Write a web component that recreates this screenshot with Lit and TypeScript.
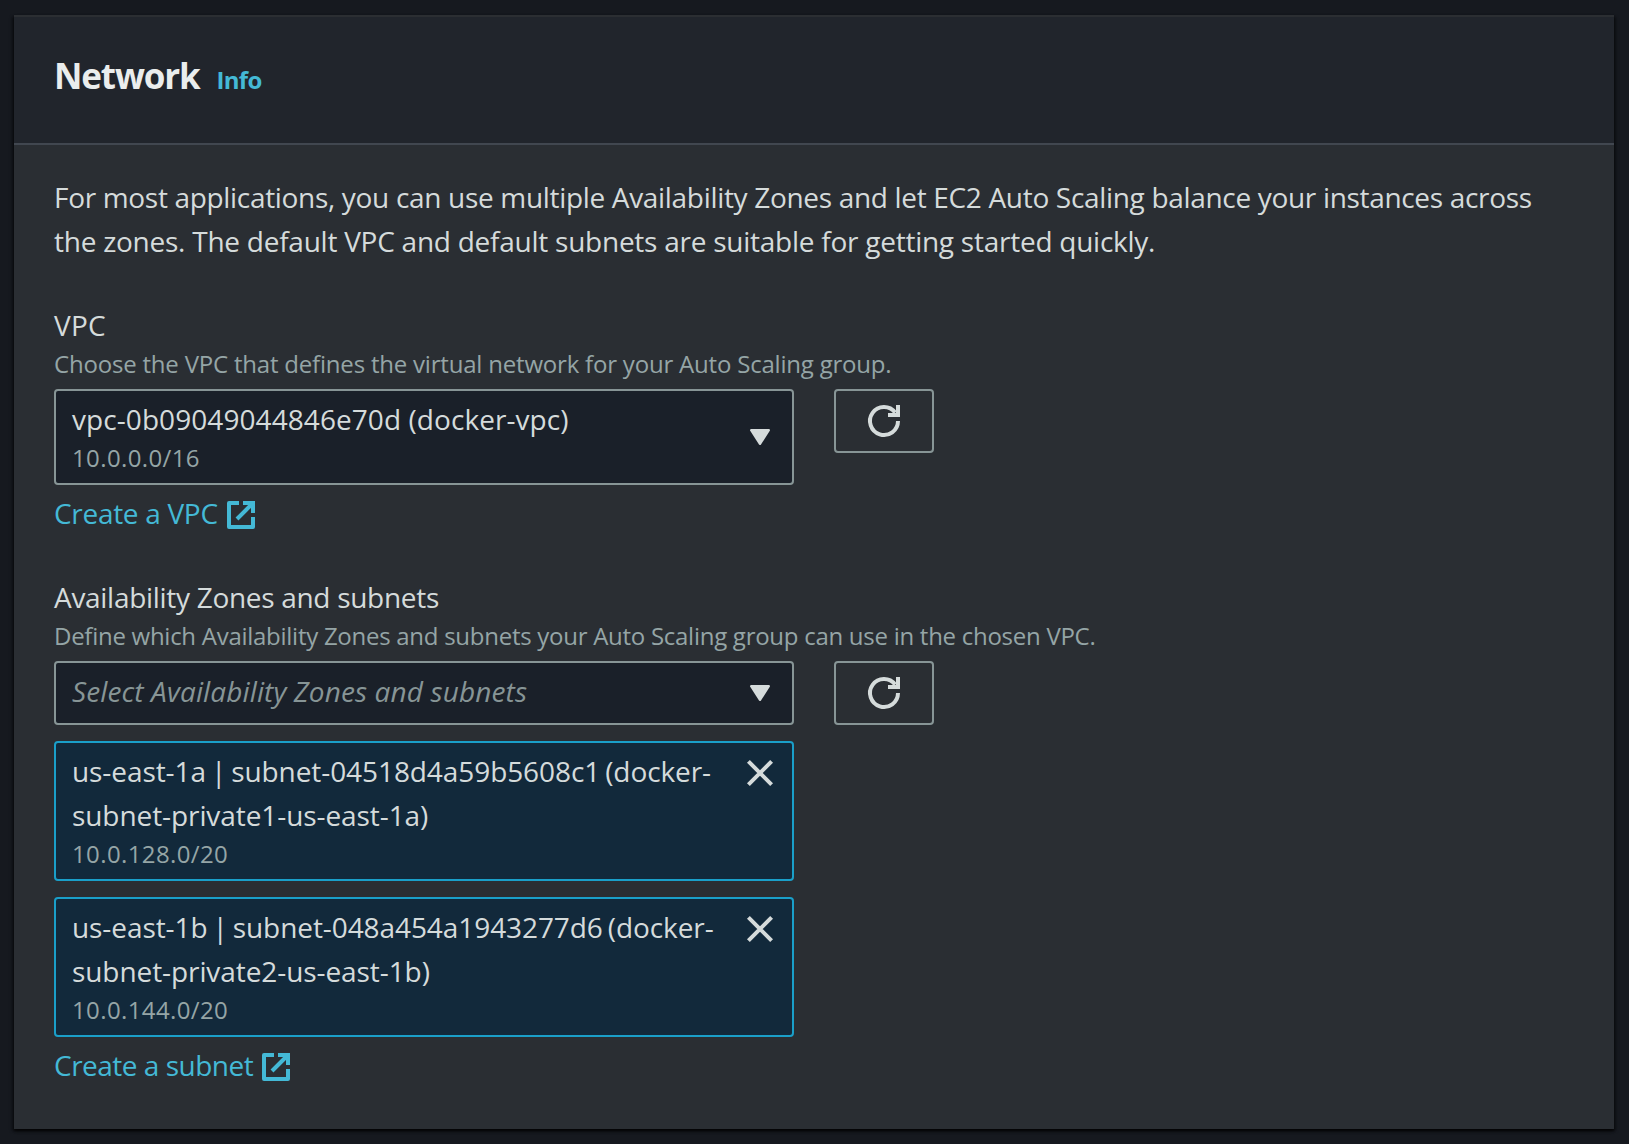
import { LitElement, html, svg, css } from 'lit';
import { customElement, property } from 'lit/decorators.js';

const glyphs = {
  refresh: {
    w: 32,
    h: 32,
    body: svg`<g fill="none" stroke="currentColor" stroke-width="4">
      <path d="M30 16A14 14 0 1 1 27.2 7.6" /><path d="M30 0V10H20" /></g>`,
  },
  caret: {
    w: 20,
    h: 16,
    body: svg`<path d="M1.2 1.2H18.8L10 14.8Z" fill="currentColor" stroke="currentColor" stroke-width="2.4" stroke-linejoin="round" />`,
  },
  close: {
    w: 26,
    h: 26,
    body: svg`<path d="M1.4 1.4L24.6 24.6M24.6 1.4L1.4 24.6" fill="none" stroke="currentColor" stroke-width="4" />`,
  },
  external: {
    w: 28,
    h: 28,
    body: svg`<g fill="none" stroke="currentColor" stroke-width="4">
      <path d="M12 2H2V26H26V16" stroke-linejoin="round" />
      <path d="M16 2H26V12" /><path d="M10 18L25.5 2.5" /></g>`,
  },
};

@customElement('ui-icon')
class UiIcon extends LitElement {
  @property() name: keyof typeof glyphs = 'close';

  static styles = css`
    :host { display: block; flex: none; }
    svg { display: block; overflow: visible; }
  `;

  render() {
    const g = glyphs[this.name];
    return html`<svg width=${g.w} height=${g.h} viewBox="0 0 ${g.w} ${g.h}" aria-hidden="true">${g.body}</svg>`;
  }
}

interface Subnet {
  name: string;
  cidr: string;
}

@customElement('app-root')
class AppRoot extends LitElement {
  private subnets: Subnet[] = [
    { name: 'us-east-1a | subnet-04518d4a59b5608c1 (docker-subnet-private1-us-east-1a)', cidr: '10.0.128.0/20' },
    { name: 'us-east-1b | subnet-048a454a1943277d6 (docker-subnet-private2-us-east-1b)', cidr: '10.0.144.0/20' },
  ];

  static styles = css`
    :host {
      display: block;
      box-sizing: border-box;
      height: 1144px;
      padding: 15px 15px 15px 14px;
      background: #16191f;
      color: #d5dbdb;
      font: 28px/44px "Open Sans", "Noto Sans", sans-serif;
      letter-spacing: -0.3px;
      overflow: hidden;
    }
    * { box-sizing: border-box; }
    .panel {
      height: 1114px;
      background: #2a2e33;
      box-shadow: 0 2px 2px rgba(0, 0, 0, 0.55), 2px 2px 3px rgba(0, 0, 0, 0.4), -2px 2px 3px rgba(0, 0, 0, 0.4);
    }
    .header {
      display: flex;
      align-items: baseline;
      gap: 17px;
      height: 130px;
      padding: 35px 40px 0;
      background: #21252c;
      border-top: 2px solid #2b2e32;
      border-bottom: 2px solid #414750;
    }
    h2 {
      margin: 0;
      color: #eaeded;
      font-size: 35px;
      line-height: 47px;
      font-weight: 700;
      letter-spacing: -1.15px;
    }
    a { color: #44b9d6; text-decoration: none; }
    .info { font-size: 24px; line-height: 33px; font-weight: 700; letter-spacing: -0.7px; }
    .body { padding: 30px 40px 0; }
    p { margin: 0; letter-spacing: -0.32px; }
    .second { letter-spacing: -0.25px; }
    .field { margin-top: 40px; }
    .label.vpc { letter-spacing: 0.2px; }
    .hint {
      margin-bottom: 9px;
      color: #95a5a6;
      font-size: 24px;
      line-height: 33px;
      letter-spacing: -0.2px;
    }
    .hint.zones { letter-spacing: -0.27px; }
    .row { display: flex; align-items: flex-start; gap: 40px; }
    .select, .token {
      display: flex;
      width: 740px;
      padding: 6px 22px 0 16px;
      border: 2px solid #879596;
      border-radius: 4px;
      justify-content: space-between;
    }
    .select { background: #1a2029; height: 64px; }
    .select ui-icon { align-self: center; margin-top: -6px; }
    .select.tall { height: 96px; }
    .value { letter-spacing: 0.07px; }
    .placeholder { color: #879596; font-style: italic; letter-spacing: 0.12px; }
    .cidr { color: #95a5a6; font-size: 24px; line-height: 33px; letter-spacing: 0.38px; }
    .refresh {
      display: flex;
      align-items: center;
      justify-content: center;
      width: 100px;
      height: 64px;
      padding: 0;
      border: 2px solid #879596;
      border-radius: 4px;
      background: none;
      color: #d5dbdb;
    }
    .token {
      height: 140px;
      margin-top: 16px;
      padding-right: 19px;
      background: #12293b;
      border-color: #1a9fc9;
    }
    .token ui-icon { margin-top: 11px; }
    .name { width: 660px; letter-spacing: -0.08px; word-spacing: -2.2px; }
    .link { display: flex; width: max-content; margin-top: 6px; gap: 9px; align-items: flex-start; }
    .link ui-icon { margin-top: 10px; }
    .link.subnet { letter-spacing: -0.5px; }
  `;

  private refresh(label: string) {
    return html`<button class="refresh" aria-label=${label}><ui-icon name="refresh"></ui-icon></button>`;
  }

  render() {
    return html`
      <section class="panel">
        <header class="header">
          <h2>Network</h2>
          <a class="info">Info</a>
        </header>
        <div class="body">
          <p>
            For most applications, you can use multiple Availability Zones and let EC2 Auto Scaling balance your instances across
            <span class="second">the zones. The default VPC and default subnets are suitable for getting started quickly.</span>
          </p>

          <div class="field">
            <div class="label vpc">VPC</div>
            <div class="hint">Choose the VPC that defines the virtual network for your Auto Scaling group.</div>
            <div class="row">
              <div class="select tall">
                <div>
                  <div class="value">vpc-0b09049044846e70d (docker-vpc)</div>
                  <div class="cidr">10.0.0.0/16</div>
                </div>
                <ui-icon name="caret"></ui-icon>
              </div>
              ${this.refresh('Refresh VPCs')}
            </div>
            <a class="link">Create a VPC<ui-icon name="external"></ui-icon></a>
          </div>

          <div class="field">
            <div class="label">Availability Zones and subnets</div>
            <div class="hint zones">Define which Availability Zones and subnets your Auto Scaling group can use in the chosen VPC.</div>
            <div class="row">
              <div class="select">
                <div class="placeholder">Select Availability Zones and subnets</div>
                <ui-icon name="caret"></ui-icon>
              </div>
              ${this.refresh('Refresh subnets')}
            </div>
            ${this.subnets.map(
              (s) => html`
                <div class="token">
                  <div>
                    <div class="name">${s.name}</div>
                    <div class="cidr">${s.cidr}</div>
                  </div>
                  <ui-icon name="close"></ui-icon>
                </div>
              `,
            )}
            <a class="link subnet">Create a subnet<ui-icon name="external"></ui-icon></a>
          </div>
        </div>
      </section>
    `;
  }
}
